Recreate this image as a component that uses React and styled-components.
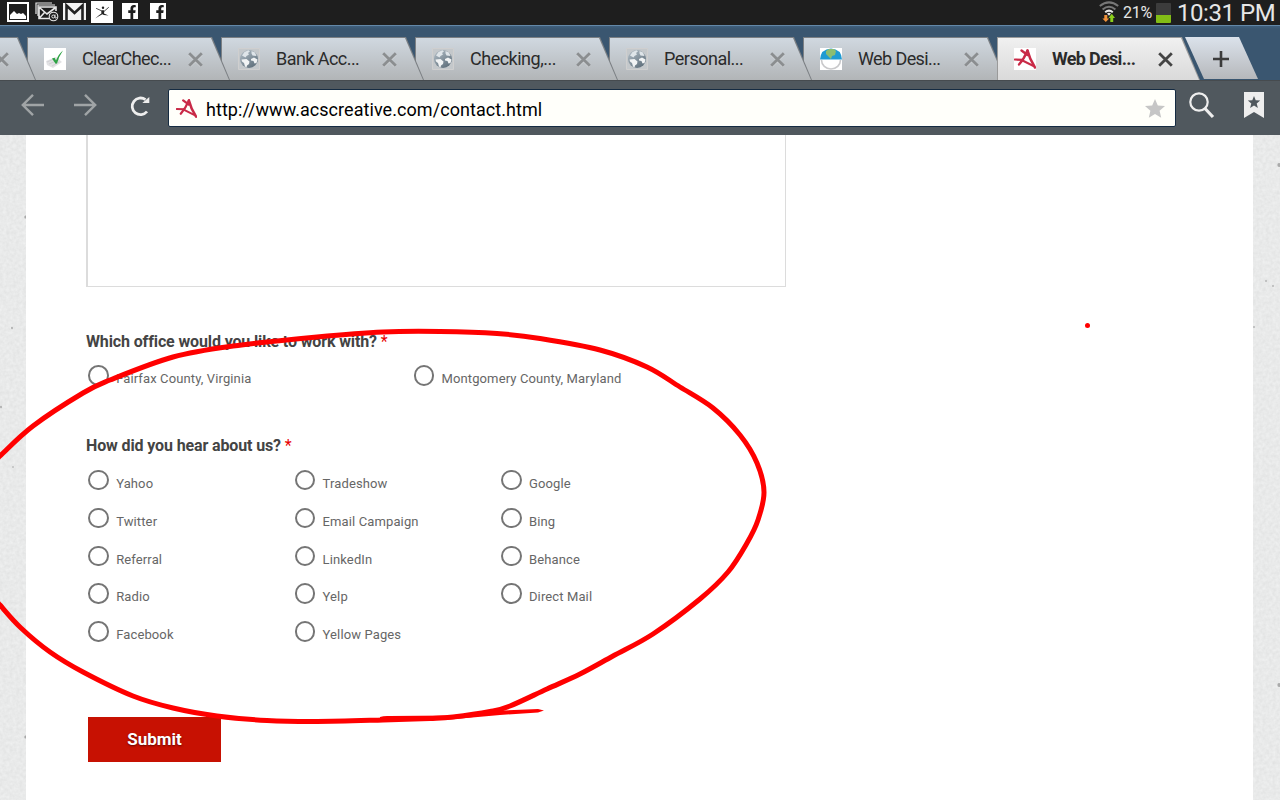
import React from "react";
import styled, { createGlobalStyle, css } from "styled-components";
import { FaFacebookF } from "react-icons/fa";

const GlobalStyle = createGlobalStyle`
  * { box-sizing: border-box; }
  body { margin: 0; overflow: hidden; font-family: Roboto, "Liberation Sans", sans-serif; }
  svg { display: block; flex: none; }
`;

const Screen = styled.div`
  position: relative;
  display: flex;
  flex-direction: column;
  width: 1280px;
  height: 800px;
  overflow: hidden;
  background: #fff;
`;

/* ---------- Android status bar ---------- */

const StatusBar = styled.header`
  display: flex;
  justify-content: space-between;
  flex: none;
  height: 25px;
  padding: 0 5px 0 7px;
  background: #1e1e1e;
  color: #e6e6e6;
`;

const Notifications = styled.div`
  display: flex;
  align-items: flex-start;
`;

const Notice = styled.span`
  margin: ${(p) => p.$top}px ${(p) => p.$gap}px 0 0;
`;

const FacebookBadge = styled.span`
  display: flex;
  align-items: flex-end;
  justify-content: center;
  width: 16px;
  height: 16px;
  margin: 3px 12px 0 0;
  padding-left: 3px;
  background: #fff;
  color: #1e1e1e;
  font-size: 14px;
`;

const SystemInfo = styled.div`
  display: flex;
  align-items: flex-start;
`;

const BatteryText = styled.span`
  width: 33px;
  margin-left: 4px;
  font-size: 16px;
  line-height: 26px;
  letter-spacing: -0.2px;
  white-space: nowrap;
`;

const Battery = styled.span`
  width: 15px;
  height: 20px;
  margin: 3px 6px 0 0;
  background: linear-gradient(#3c3c3c 60%, #83bd16 60%);
  border-radius: 1px;
`;

const Clock = styled.span`
  width: 98px;
  font-size: 24px;
  line-height: 27px;
  letter-spacing: -0.45px;
  white-space: nowrap;
`;

/* ---------- Tab strip ---------- */

const TabStrip = styled.nav`
  display: flex;
  flex: none;
  height: 55px;
  padding-top: 11px;
  border-top: 1px solid #6388a8;
  background: linear-gradient(#3f5f7d, #3a5670 3px);
  overflow: hidden;
`;

const tabShape = css`
  content: "";
  position: absolute;
  inset: 0 -9px 0 0;
  z-index: -1;
`;

const Tab = styled.div`
  position: relative;
  z-index: ${(p) => p.$z};
  isolation: isolate;
  display: flex;
  align-items: center;
  flex: none;
  width: 194px;
  height: 44px;
  margin-left: ${(p) => (p.$first ? "-167px" : 0)};
  padding: 0 0 0 17px;
  color: #2b2b2b;
  font-size: 18px;
  font-weight: ${(p) => (p.$active ? 700 : 400)};

  &::before {
    ${tabShape}
    background: ${(p) => (p.$active ? "#9a9a9a" : "#7b7f83")};
    clip-path: polygon(0 0, 185px 0, 203px 43px, 203px 44px, 0 44px);
  }
  &::after {
    ${tabShape}
    background: ${(p) =>
      p.$active ? "linear-gradient(#f1f1f1, #d9d9d9)" : "linear-gradient(#d1d9e1, #b1b4b6)"};
    clip-path: polygon(1px 1px, 184px 1px, 202px 43px, 1px 43px);
  }
`;

const TabTitle = styled.span`
  width: 92px;
  margin: 0 14px 0 16px;
  padding-bottom: 1px;
  letter-spacing: ${(p) => p.$spacing}px;
  white-space: nowrap;
`;

const NewTab = styled.div`
  display: flex;
  align-items: center;
  justify-content: center;
  flex: none;
  width: 74px;
  height: 43px;
  margin-left: -6px;
  padding-right: 2px;
  background: linear-gradient(#dbe2eb, #b5b7ba);
  clip-path: polygon(0 0, 54px 0, 73px 42px, 19px 42px);
`;

/* ---------- Address bar ---------- */

const Toolbar = styled.div`
  display: flex;
  align-items: flex-start;
  height: 55px;
  flex: none;
  background: #50585e;
  border-top: 1px solid #464b4f;
`;

const Tool = styled.span`
  margin: ${(p) => p.$top}px 0 0 ${(p) => p.$left}px;
`;

const AddressField = styled.div`
  display: flex;
  align-items: center;
  width: 1008px;
  height: 38px;
  margin: 8px 0 0 17px;
  padding: 0 10px 0 7px;
  border: 1px solid #152b42;
  border-radius: 2px;
  background: #fffffa;
  color: #000;
  font-size: 18px;
`;

const Url = styled.span`
  flex: 1;
  padding: 3px 0 0 9px;
  letter-spacing: 0.06px;
`;

/* ---------- Web page ---------- */

const Viewport = styled.main`
  display: flex;
  flex: 1;
  min-height: 0;
`;

const Gutter = styled.div`
  flex: none;
  width: ${(p) => p.$w}px;
  background: #e8e9e9;
  overflow: hidden;
`;

const Form = styled.form`
  display: flex;
  flex-direction: column;
  align-items: flex-start;
  flex: 1;
  padding-left: 60px;
  background: #fff;
`;

const Message = styled.div`
  flex: none;
  width: 700px;
  height: 152px;
  border: solid #dcdcdc;
  border-width: 0 1px 1px 2px;
`;

const Question = styled.h3`
  height: 22px;
  margin: ${(p) => p.$top}px 0 0;
  color: #444;
  font-size: 16px;
  line-height: 22px;
  letter-spacing: ${(p) => p.$spacing}px;
  white-space: nowrap;
`;

const Required = styled.span`
  color: #e80000;
  font-weight: 400;
`;

const Options = styled.div`
  display: grid;
  grid-template-columns: repeat(${(p) => p.$cols}, ${(p) => p.$colWidth}px);
  grid-auto-rows: 37.8px;
  margin: ${(p) => p.$top}px 0 0 2.4px;
`;

const Option = styled.label`
  display: flex;
  align-items: flex-start;
  color: #666;
  font-size: 13px;
  line-height: 20px;
  letter-spacing: 0.12px;
`;

const Circle = styled.i`
  width: 20.5px;
  height: 20.5px;
  margin-right: 7.3px;
  border: 2px solid #757575;
  border-radius: 50%;
`;

const OptionText = styled.span`
  padding-top: 4px;
  white-space: nowrap;
`;

const Submit = styled.button`
  width: 133px;
  height: 45px;
  margin: 58px 0 0 2px;
  padding: 0;
  border: 0;
  background: #c71102;
  color: #fff;
  font: 700 17px Roboto, sans-serif;
  text-shadow: 0 1px 2px rgba(60, 0, 0, 0.7);
`;

const Ink = styled.svg`
  position: absolute;
  inset: 0;
  pointer-events: none;
`;

/* ---------- Icons ---------- */

const PictureIcon = () => (
  <svg width="22" height="20" viewBox="0 0 22 20">
    <path fill="#fff" fillRule="evenodd" d="M0 0h22v20H0zM2 2v16h18V2z" />
    <path fill="#fff" d="M3 17v-4l4-4 3 3 2-1 2 1 2-1 3 3v3z" />
  </svg>
);

const MailIcon = () => (
  <svg width="24" height="20" viewBox="0 0 24 20" fill="none" stroke="#e8e8e8">
    <path strokeWidth="1.2" d="M1 12V1h16M3 14V3h17" />
    <path strokeWidth="1.6" d="M16 16.5H4V5h17v4M5 6l7 6 8-6M4.500 16l5-5.500" />
    <circle cx="18.500" cy="14.500" r="4.300" fill="#1e1e1e" strokeWidth="1.100" />
    <circle cx="18.300" cy="14.500" r="1.500" />
    <path d="M20 12.500v3.200q1 1 1.700-.2" />
  </svg>
);

const GmailIcon = () => (
  <svg width="23" height="17" viewBox="0 0 23 17">
    <path fill="#f3f3f3" d="M0 0h23v17H0z" />
    <path fill="none" stroke="#222" strokeWidth="2.600" d="M3.500 17V2.500l8 7.500 8-7.500V17" />
  </svg>
);

const DancerIcon = () => (
  <svg width="22" height="22" viewBox="0 0 22 22">
    <path fill="#fff" d="M0 0h22v22H0z" />
    <circle cx="12" cy="6.800" r="1.200" fill="#222" />
    <path
      fill="none"
      stroke="#222"
      strokeWidth=".8"
      strokeLinecap="round"
      d="M5.500 7.500l5 2.300 3 .2 4-3.500"
    />
    <path fill="#222" d="M10.300 9.500h3l-.3 3 4.500 2-4.600-.4-1.500-.8-3.200 1.700-4 2.500 3.700-3.200 2.500-1.800z" />
  </svg>
);

const WifiIcon = () => (
  <svg width="20" height="22" viewBox="0 0 20 22" fill="none">
    <path stroke="#777" strokeWidth="2" d="M.8 6Q10-1.300 19.200 6M3.600 9.500Q10 4 16.400 9.500" />
    <path stroke="#e8e8e8" strokeWidth="2" d="M6.200 12.300Q10 9 13.800 12.300" />
    <path fill="#e8e8e8" d="M8 13.500q2-1.300 4 0L10 15.700z" />
    <path fill="#f0913a" d="M5.300 15h3v3.500h1.900L6.800 22l-3.400-3.500h1.900z" />
    <path fill="#8ccf1c" d="M11.300 22v-4H9.500l3.300-4.200L16 18h-1.800v4z" />
  </svg>
);

const CloseIcon = ({ color }) => (
  <svg width="15" height="15" viewBox="0 0 15 15">
    <path d="M1.500 2.500l12 12M13.500 2.500l-12 12" stroke="#fff" strokeOpacity=".3" strokeWidth="2.600" />
    <path d="M1.200 1.200l12.600 12.600M13.800 1.200L1.200 13.800" stroke={color} strokeWidth="2.800" />
  </svg>
);

const CheckFavicon = () => (
  <svg width="22" height="22" viewBox="0 0 22 22">
    <path fill="#fff" d="M0 0h22v22H0z" />
    <path fill="#e2e2e4" d="M2 13l10-4 6 5-9 6-6-3z" />
    <path fill="none" stroke="#c9c9cd" strokeWidth=".7" d="M3 14l7-3M5 16l8-3.500M8 18l7-4" />
    <path fill="#2ea345" d="M8 10.500l2.600-.7 1.400 2.800Q14.500 6 19 2.500 15 8 13 15.500l-1.400.3z" />
  </svg>
);

const GlobeFavicon = () => (
  <svg width="22" height="22" viewBox="0 0 22 22">
    <defs>
      <linearGradient id="globe" x1="0" y1="0" x2=".7" y2="1">
        <stop offset="0" stopColor="#b4c0c9" />
        <stop offset="1" stopColor="#61717d" />
      </linearGradient>
    </defs>
    <path fill="#c4c8cb" stroke="#cfcfcf" d="M.5.500h21v21H.5z" />
    <circle cx="11" cy="11" r="9" fill="url(#globe)" />
    <path fill="#f1f3f4" d="M3.500 11.500l5-.5 3 2.500-.5 2.500-2 1.500-.5 2-1.500-1-1-3.500-2-1.500z" />
    <path fill="#f1f3f4" d="M13 11l3-1.500 3.500 2-1 3.500-2 .5-1-2.500-2.500-.5z" />
    <path fill="#dfe5e9" d="M4 7.500l2.500-3.500 4-1.800 1.500 1-2 1.800 1 1.500-2.500 1.500-1 1.500zM13.500 3l3.500 1.500L18.500 8l-4-.5-1-2z" />
  </svg>
);

const SkyFavicon = () => (
  <svg width="22" height="22" viewBox="0 0 22 22">
    <path fill="#fff" d="M0 0h22v22H0z" />
    <path fill="#fff" stroke="#c9c9cb" strokeWidth="1.600" d="M1.500 12a9.500 9 0 0 0 19 0" />
    <path fill="#209bd3" d="M0 11.500Q.7 1 11 .5 21.300 1 22 11.500z" />
    <path fill="#8bbd72" d="M6 3l3-2 5 0 2 2-1 4-3 1-1 3-3-3-2-2z" />
  </svg>
);

const StarLogo = ({ size, backdrop }) => (
  <svg width={size} height={size} viewBox="0 0 22 22">
    <path fill={backdrop} d="M0 0h22v22H0z" />
    <g fill="none" stroke="#c92a47" strokeLinecap="round">
      <path strokeWidth="2.600" d="M13.500 2.500Q15.500 11 21 19.500" />
      <path strokeWidth="2.400" d="M13.500 2.500Q10 11 5 16.500M7.500 2.500l6 4.500" />
      <path strokeWidth="2.200" d="M.8 11.500l8 .3" />
      <path strokeWidth="2" d="M8.500 12.500l11 5.500" />
    </g>
  </svg>
);

const ArrowIcon = ({ flip }) => (
  <svg width="24" height="24" viewBox="0 0 24 24">
    <path
      d={flip ? "M1 12h21M12 1.800L22.200 12 12 22.200" : "M23 12H2M12 1.800L1.800 12 12 22.200"}
      fill="none"
      stroke="#a0a4a6"
      strokeWidth="2.400"
    />
  </svg>
);

const ReloadIcon = () => (
  <svg width="21" height="22" viewBox="0 0 21 22">
    <path d="M17 16.500A8.300 8.300 0 1 1 15.500 4.700" fill="none" stroke="#eee" strokeWidth="2.800" />
    <path fill="#eee" d="M19.300 2v6h-7z" />
  </svg>
);

const StarIcon = () => (
  <svg width="20" height="19" viewBox="0 0 20 19">
    <path fill="#c6c6c6" d="M10 0l2.800 6.400 7.200.7-5.400 4.700 1.600 7L10 15l-6.200 3.800 1.600-7L0 7.100l7.200-.7z" />
  </svg>
);

const SearchIcon = () => (
  <svg width="27" height="28" viewBox="0 0 27 28" fill="none" stroke="#eee">
    <circle cx="10" cy="11" r="8.700" strokeWidth="2.200" />
    <path strokeWidth="3.200" d="M15.500 17l8.500 9" />
  </svg>
);

const BookmarkIcon = () => (
  <svg width="20" height="28" viewBox="0 0 20 28">
    <path fill="#eee" d="M0 1h20v26l-10-6-10 6z" />
    <path
      fill="#50585e"
      d="M10 5l1.700 4.300 4.500.2-3.500 2.900 1.200 4.500L10 14.400l-3.900 2.500 1.200-4.500-3.500-2.900 4.500-.2z"
    />
  </svg>
);

const PaperTexture = ({ id, seed, specks }) => (
  <svg width="27" height="665">
    <filter id={id} x="0" y="0" width="100%" height="100%" colorInterpolationFilters="sRGB">
      <feTurbulence type="fractalNoise" baseFrequency=".3" numOctaves="2" seed={seed} />
      <feColorMatrix values=".07 0 0 0 .877  .07 0 0 0 .881  .07 0 0 0 .881  0 0 0 0 1" />
    </filter>
    <rect width="27" height="665" filter={`url(#${id})`} />
    {specks.map(([x, y, r]) => (
      <ellipse key={y} cx={x} cy={y} rx={r} ry={r * 1.3} fill="#777" fillOpacity=".55" />
    ))}
  </svg>
);

/* ---------- Data ---------- */

const tabs = [
  { title: "", icon: <GlobeFavicon /> },
  { title: "ClearChec...", icon: <CheckFavicon />, spacing: -0.6 },
  { title: "Bank Acc...", icon: <GlobeFavicon />, spacing: -0.55 },
  { title: "Checking,...", icon: <GlobeFavicon />, spacing: -0.5 },
  { title: "Personal...", icon: <GlobeFavicon />, spacing: -0.5 },
  { title: "Web Desi...", icon: <SkyFavicon />, spacing: -0.6 },
  { title: "Web Desi...", icon: <StarLogo size={22} backdrop="#fff" />, spacing: -0.7, active: true },
];

const offices = ["Fairfax County, Virginia", "Montgomery County, Maryland"];

const sources = [
  "Yahoo", "Tradeshow", "Google",
  "Twitter", "Email Campaign", "Bing",
  "Referral", "LinkedIn", "Behance",
  "Radio", "Yelp", "Direct Mail",
  "Facebook", "Yellow Pages",
];

const strokePoints = [
  [-12, 468], [0, 456], [33, 426], [83, 393], [110, 380], [173, 357], [233, 346], [317, 337],
  [383, 332], [440, 331.5], [497, 333.5], [540, 338.5], [600, 350], [647, 367], [680, 387],
  [713, 408], [740, 435], [757, 463], [764, 492], [758, 520], [747, 543], [728, 572], [700, 599],
  [653, 634], [613, 656], [580, 674], [547, 689], [510, 706], [490, 711.5], [453, 717],
  [430, 718.5], [383, 720], [317, 721.5], [267, 720.5], [217, 716], [173, 708], [133, 696],
  [83, 672], [50, 652], [21, 628], [0, 605], [-12, 590],
];

/* Catmull-Rom spline through the given points, written as cubic segments. */
const smooth = (pts) =>
  pts.slice(1).reduce((d, p, i) => {
    const a = pts[i - 1] || pts[i];
    const b = pts[i];
    const c = pts[i + 2] || p;
    return `${d}C${b[0] + (p[0] - a[0]) / 6} ${b[1] + (p[1] - a[1]) / 6} ${p[0] - (c[0] - b[0]) / 6} ${
      p[1] - (c[1] - b[1]) / 6
    } ${p[0]} ${p[1]}`;
  }, `M${pts[0][0]} ${pts[0][1]}`);

const RadioGroup = ({ items, ...layout }) => (
  <Options {...layout}>
    {items.map((item) => (
      <Option key={item}>
        <Circle />
        <OptionText>{item}</OptionText>
      </Option>
    ))}
  </Options>
);

export default function App() {
  return (
    <Screen>
      <GlobalStyle />
      <StatusBar>
        <Notifications>
          <Notice $top={2} $gap={6}><PictureIcon /></Notice>
          <Notice $top={2} $gap={4}><MailIcon /></Notice>
          <Notice $top={3} $gap={5}><GmailIcon /></Notice>
          <Notice $top={1} $gap={9}><DancerIcon /></Notice>
          <FacebookBadge><FaFacebookF /></FacebookBadge>
          <FacebookBadge><FaFacebookF /></FacebookBadge>
        </Notifications>
        <SystemInfo>
          <WifiIcon />
          <BatteryText>21%</BatteryText>
          <Battery />
          <Clock>10:31 PM</Clock>
        </SystemInfo>
      </StatusBar>

      <TabStrip>
        {tabs.map((tab, i) => (
          <Tab key={i} $first={i === 0} $active={tab.active} $z={tab.active ? 20 : 10 - i}>
            {tab.icon}
            <TabTitle $spacing={tab.spacing || 0}>{tab.title}</TabTitle>
            <CloseIcon color={tab.active ? "#444" : "#8b8e90"} />
          </Tab>
        ))}
        <NewTab>
          <svg width="16" height="16" viewBox="0 0 16 16">
            <path d="M8 0v16M0 8h16" stroke="#3b3b3b" strokeWidth="2.600" />
          </svg>
        </NewTab>
      </TabStrip>

      <Toolbar>
        <Tool $top={12} $left={21}><ArrowIcon /></Tool>
        <Tool $top={12} $left={28}><ArrowIcon flip /></Tool>
        <Tool $top={14} $left={33}><ReloadIcon /></Tool>
        <AddressField>
          <StarLogo size={21} backdrop="#fffffa" />
          <Url>http://www.acscreative.com/contact.html</Url>
          <StarIcon />
        </AddressField>
        <Tool $top={10} $left={13}><SearchIcon /></Tool>
        <Tool $top={10} $left={28}><BookmarkIcon /></Tool>
      </Toolbar>

      <Viewport>
        <Gutter $w={26}>
          <PaperTexture
            id="paperLeft"
            seed="4"
            specks={[[25.5, 82, 1.2], [12, 193, 0.9], [1, 272, 0.9], [13, 332, 0.7], [25.5, 602, 1.2]]}
          />
        </Gutter>
        <Form as="div">
          <Message />
          <Question $top={44} $spacing={-0.13}>
            Which office would you like to work with? <Required>*</Required>
          </Question>
          <RadioGroup items={offices} $cols={2} $colWidth={325.3} $top={12} />
          <Question $top={32} $spacing={-0.13}>
            How did you hear about us? <Required>*</Required>
          </Question>
          <RadioGroup items={sources} $cols={3} $colWidth={206.4} $top={13.2} />
          <Submit type="button">Submit</Submit>
        </Form>
        <Gutter $w={27}>
          <PaperTexture
            id="paperRight"
            seed="9"
            specks={[[26, 30, 1.6], [13, 146, 0.8], [20, 151, 0.8], [1, 192, 0.8], [26, 550, 1.6]]}
          />
        </Gutter>
      </Viewport>

      <Ink width="1280" height="800" fill="none">
        <path d={smooth(strokePoints)} stroke="#f00" strokeWidth="5" strokeLinecap="round" />
        <path
          fill="#f00"
          d="M380 717Q384 715.500 390 716L450 715.500 490 711 538 709 544 710.500 538 712.500 500 715 450 719.500 380 721z"
        />
        <circle cx="1087.500" cy="325.500" r="2.500" fill="#f00" />
      </Ink>
    </Screen>
  );
}
